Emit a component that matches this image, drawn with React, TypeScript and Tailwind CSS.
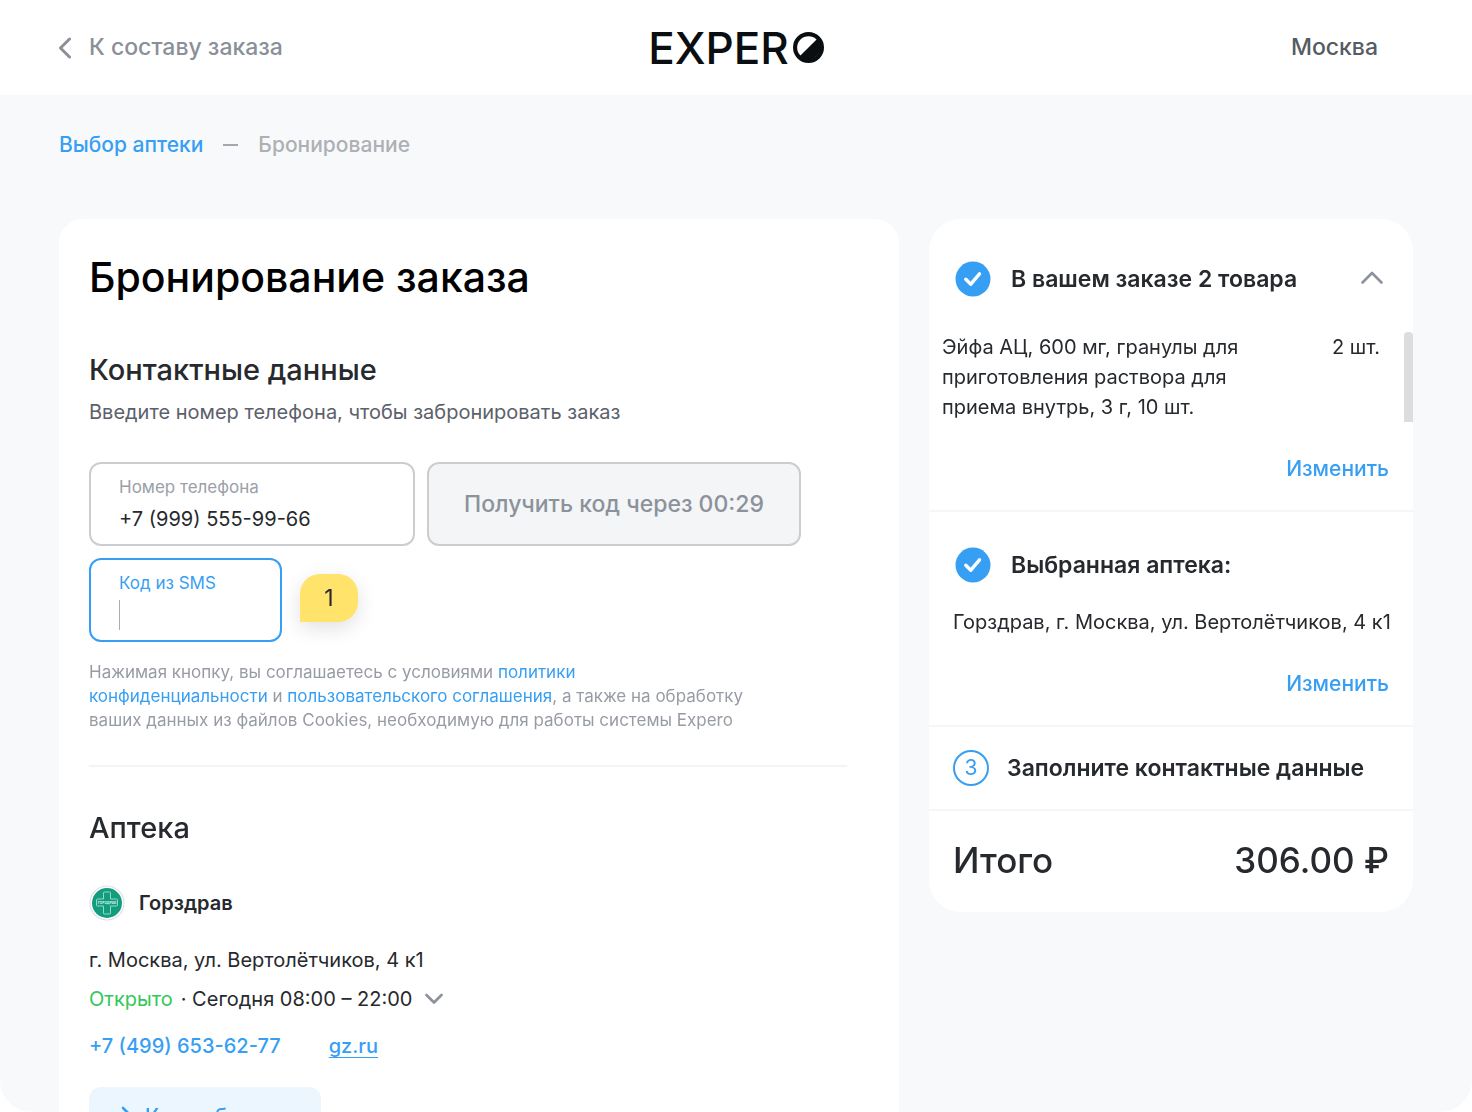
import React, { useEffect, useRef, useState } from 'react';

const CheckBadge = () => (
    <svg width="36" height="36" viewBox="0 0 36 36" fill="none" className="shrink-0">
        <circle cx="18" cy="18" r="17.5" fill="#379ff3" />
        <path d="M10.800 18.200l5 5 8.700-10.400" stroke="#fff" strokeWidth="3.400" strokeLinecap="round" strokeLinejoin="round" />
    </svg>
);

const PharmacyLogo = () => (
    <svg width="36" height="36" viewBox="0 0 36 36" fill="none" className="shrink-0">
        <circle cx="18" cy="18" r="17" fill="#fff" stroke="#dfe2e4" strokeWidth="1.200" />
        <circle cx="18" cy="18" r="15" fill="#129d7f" />
        <path
            d="M15.500 7h5a1 1 0 0 1 1 1v6h6a1 1 0 0 1 1 1v5a1 1 0 0 1-1 1h-6v7a1 1 0 0 1-1 1h-5a1 1 0 0 1-1-1v-7h-6a1 1 0 0 1-1-1v-5a1 1 0 0 1 1-1h6V8a1 1 0 0 1 1-1z"
            stroke="#a5dccf"
            strokeWidth="0.900"
        />
        <text x="18" y="19" textAnchor="middle" fontSize="3.400" fontWeight="700" fill="#d3efe8">
            ГОРЗДРАВ
        </text>
    </svg>
);

const Logo = () => (
    <a href="#" aria-label="Expero" className="flex items-center gap-1 text-[#0b0e11]">
        <span className="text-[44px] leading-[46px] font-medium">EXPER</span>
        <svg width="31" height="31" viewBox="0 0 30 30" fill="none">
            <circle cx="15" cy="15" r="13" stroke="currentColor" strokeWidth="4" />
            <path d="M25 5A14.500 14.500 0 0 1 5 25z" fill="currentColor" />
        </svg>
    </a>
);

interface StepTitleProps {
    children: React.ReactNode;
}

const StepTitle = ({ children }: StepTitleProps) => (
    <div className="flex items-center gap-5">
        <CheckBadge />
        <h3 className="text-[23px] font-semibold">{children}</h3>
    </div>
);

const App = () => {
    const [phone, setPhone] = useState('+7 (999) 555-99-66');
    const [code, setCode] = useState('');
    const [isOrderOpen, setIsOrderOpen] = useState(true);
    const codeRef = useRef<HTMLInputElement>(null);

    useEffect(() => {
        codeRef.current?.focus();
    }, []);

    return (
        <div className="h-screen overflow-y-auto [scrollbar-width:none] rounded-b-[32px] bg-[#f7f9fb] font-['Inter',sans-serif] text-[#26292d]">
            {/* Header */}
            <header className="grid grid-cols-3 items-center h-[95px] px-[59px] bg-white">
                <a href="#" className="flex items-center gap-[18px] text-[23px] font-medium text-[#8a8f99]">
                    <svg width="12" height="22" viewBox="0 0 12 22" fill="none">
                        <path d="M10.500 2L1.500 11l9 9" stroke="currentColor" strokeWidth="3" strokeLinecap="round" strokeLinejoin="round" />
                    </svg>
                    К составу заказа
                </a>
                <div className="flex justify-center">
                    <Logo />
                </div>
                <button type="button" className="justify-self-end mr-[35px] text-[23px] font-medium text-[#555b63] cursor-pointer">
                    Москва
                </button>
            </header>

            <main className="px-[59px]">
                {/* Breadcrumbs */}
                <nav className="flex items-center gap-5 pt-[35px] text-[21px] leading-[30px] font-medium">
                    <a href="#" className="text-[#379ff3]">Выбор аптеки</a>
                    <span className="w-[15px] h-[2px] bg-[#a3a8ae]" />
                    <span className="text-[#aeb0b3]">Бронирование</span>
                </nav>

                <div className="flex items-start gap-[30px] mt-[59px]">
                    {/* Booking */}
                    <section className="flex-1 px-[30px] pt-[30px] pb-10 rounded-3xl bg-white">
                        <h1 className="text-[41px] leading-[56px] font-medium text-black">Бронирование заказа</h1>

                        <h2 className="mt-[45px] text-[29px] leading-[40px] font-medium">Контактные данные</h2>
                        <p className="mt-[7px] text-[20px] leading-[30px] text-[#5b616a]">
                            Введите номер телефона, чтобы забронировать заказ
                        </p>

                        <form className="mt-[35px] space-y-3" onSubmit={(e) => e.preventDefault()}>
                            <div className="flex gap-3">
                                <div className="w-[326px] h-[84px] px-7 pt-2 border-2 border-[#cbcdd0] rounded-xl">
                                    <label htmlFor="phone" className="block text-[17px] leading-[30px] text-[#9ba0a8]">
                                        Номер телефона
                                    </label>
                                    <input
                                        id="phone"
                                        type="tel"
                                        value={phone}
                                        onChange={(e) => setPhone(e.target.value)}
                                        className="block w-full h-[34px] text-[20px] outline-none"
                                    />
                                </div>
                                <button
                                    type="button"
                                    disabled
                                    className="w-[374px] h-[84px] border-2 border-[#cbcdd0] rounded-xl bg-[#f3f5f7] text-[23px] font-medium text-[#8c929b]"
                                >
                                    Получить код через 00:29
                                </button>
                            </div>
                            <div className="flex items-start gap-[18px]">
                                <div className="w-[193px] h-[84px] px-7 pt-2 border-2 border-[#379ff3] rounded-xl">
                                    <label htmlFor="code" className="block text-[17px] leading-[30px] text-[#379ff3]">
                                        Код из SMS
                                    </label>
                                    <div className="flex items-center h-[34px]">
                                        {!code && <span className="w-px h-[30px] bg-[#a9acb0]" />}
                                        <input
                                            id="code"
                                            ref={codeRef}
                                            inputMode="numeric"
                                            value={code}
                                            onChange={(e) => setCode(e.target.value)}
                                            className="w-full text-[20px] outline-none caret-transparent"
                                        />
                                    </div>
                                </div>
                                <span className="flex items-center justify-center w-[58px] h-12 mt-4 rounded-[20px] rounded-bl-none bg-[#ffe36b] text-[23px] shadow-[0_6px_20px_rgba(0,0,0,0.12)]">
                                    1
                                </span>
                            </div>
                        </form>

                        <p className="mt-[18px] text-[17px] leading-[24px] text-[#979ca4]">
                            Нажимая кнопку, вы соглашаетесь с условиями <a href="#" className="text-[#379ff3]">политики<br />
                            конфиденциальности</a> и <a href="#" className="text-[#379ff3]">пользовательского соглашения</a>, а также на обработку<br />
                            ваших данных из файлов Cookies, необходимую для работы системы Expero
                        </p>

                        <hr className="mt-[33px] mr-[22px] border-t-2 border-[#f3f4f6]" />

                        {/* Pharmacy */}
                        <h2 className="mt-[41px] text-[29px] leading-[40px] font-medium">Аптека</h2>
                        <div className="flex items-center gap-[14px] mt-[37px]">
                            <PharmacyLogo />
                            <span className="text-[20px] font-semibold">Горздрав</span>
                        </div>
                        <p className="mt-6 text-[20px] leading-[30px]">г. Москва, ул. Вертолётчиков, 4 к1</p>
                        <button type="button" className="flex items-center mt-[9px] text-[20px] leading-[30px] cursor-pointer">
                            <span className="text-[#34c759]">Открыто</span>
                            <span className="ml-2">· Сегодня 08:00 – 22:00</span>
                            <svg width="18" height="12" viewBox="0 0 18 12" fill="none" className="ml-[13px]">
                                <path d="M1.500 2L9 9.500 16.500 2" stroke="#8c929b" strokeWidth="2.600" strokeLinecap="round" strokeLinejoin="round" />
                            </svg>
                        </button>
                        <div className="flex gap-12 mt-[17px] text-[20px] leading-[30px] font-medium text-[#379ff3]">
                            <a href="tel:+74996536277">+7 (499) 653-62-77</a>
                            <a href="#" className="underline decoration-1 underline-offset-4">gz.ru</a>
                        </div>
                        <a href="#" className="flex items-center gap-[10px] w-[232px] h-[60px] mt-[26px] pl-6 rounded-xl bg-[#ebf6ff] text-[21px] font-medium text-[#379ff3]">
                            <svg width="22" height="22" viewBox="0 0 22 22" fill="none">
                                <path d="M10 2l7 7-7 7M17 9H7a4 4 0 0 0-4 4v7" stroke="currentColor" strokeWidth="2.600" strokeLinecap="round" strokeLinejoin="round" />
                            </svg>
                            Как добраться
                        </a>
                    </section>

                    {/* Order summary */}
                    <aside className="w-[484px] rounded-[32px] bg-white">
                        <div className="pt-[42px] pb-[26px] border-b-2 border-[#f5f6f8]">
                            <div className="flex items-center justify-between pl-[26px] pr-[30px]">
                                <StepTitle>В вашем заказе 2 товара</StepTitle>
                                <button
                                    type="button"
                                    aria-label="Свернуть"
                                    onClick={() => setIsOrderOpen(prev => !prev)}
                                    className="cursor-pointer"
                                >
                                    <svg width="22" height="16" viewBox="0 0 22 16" fill="none" className={isOrderOpen ? '' : 'rotate-180'}>
                                        <path d="M1.500 11.500L11 2l9.500 9.500" stroke="#8c929b" strokeWidth="2.600" strokeLinecap="round" strokeLinejoin="round" />
                                    </svg>
                                </button>
                            </div>
                            {isOrderOpen && (
                                <div className="flex mt-[35px] pl-[13px] text-[20px] leading-[30px]">
                                    <p className="flex-1">
                                        Эйфа АЦ, 600 мг, гранулы для<br />
                                        приготовления раствора для<br />
                                        приема внутрь, 3 г, 10 шт.
                                    </p>
                                    <span className="mr-6">2 шт.</span>
                                    <span className="w-[9px] rounded-t-sm bg-[#dcdddf]" />
                                </div>
                            )}
                            <div className="flex justify-end mt-8 pr-6">
                                <button type="button" className="text-[21px] leading-[30px] font-medium text-[#379ff3] cursor-pointer">
                                    Изменить
                                </button>
                            </div>
                        </div>

                        <div className="pt-[35px] pb-[26px] border-b-2 border-[#f5f6f8]">
                            <div className="pl-[26px]">
                                <StepTitle>Выбранная аптека:</StepTitle>
                            </div>
                            <p className="mt-6 pl-6 text-[20px] leading-[30px] whitespace-nowrap">Горздрав, г. Москва, ул. Вертолётчиков, 4 к1</p>
                            <div className="flex justify-end mt-8 pr-6">
                                <button type="button" className="text-[21px] leading-[30px] font-medium text-[#379ff3] cursor-pointer">
                                    Изменить
                                </button>
                            </div>
                        </div>

                        <div className="flex items-center gap-[18px] px-6 py-[23px] border-b-2 border-[#f5f6f8]">
                            <span className="flex items-center justify-center w-9 h-9 rounded-full border-2 border-[#379ff3] text-[21px] text-[#379ff3]">
                                3
                            </span>
                            <h3 className="text-[23px] font-semibold">Заполните контактные данные</h3>
                        </div>

                        <div className="flex justify-between px-6 pt-[25px] pb-7 text-[35px] leading-[48px] font-medium">
                            <span>Итого</span>
                            <span>306.00 ₽</span>
                        </div>
                    </aside>
                </div>
            </main>
        </div>
    );
};

export default App;
